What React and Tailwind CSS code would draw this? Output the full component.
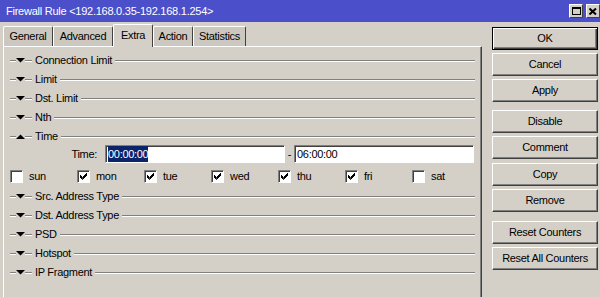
import React from 'react';

const font = { fontFamily: '"Liberation Sans", Arial, sans-serif' };

// etched separator line (grey over white)
const Etch = ({ className = '' }) => (
  <span className={`block h-[2px] border-t border-b border-t-[#808080] border-b-white ${className}`} />
);

const Arrow = ({ up }) => (
  <svg width="9" height="5" viewBox="0 0 9 5" className="block shrink-0">
    {up ? <polygon points="0,5 9,5 4.5,0.5" fill="#000" /> : <polygon points="0,0 9,0 4.5,4.5" fill="#000" />}
  </svg>
);

const Section = ({ label, open }) => (
  <div className="flex h-[19px] items-center pl-[6px] pr-[6px]">
    <Etch className="w-[6px]" />
    <Arrow up={open} />
    <Etch className="w-[7px]" />
    <span className="ml-[3px] mr-[3px] whitespace-nowrap">{label}</span>
    <Etch className="flex-1" />
  </div>
);

const Check = ({ on, label }) => (
  <div className="flex w-[67px] items-center">
    <span className="flex h-[13px] w-[13px] items-center justify-center border border-t-[#808080] border-l-[#808080] border-r-white border-b-white bg-white shadow-[inset_1px_1px_0_#404040]">
      {on && (
        <svg width="7" height="7" viewBox="0 0 7 7" className="block">
          <path d="M0 2 L2.5 4.5 L7 0 M0 3 L2.5 5.5 L7 1 M0 4 L2.5 6.5 L7 2" stroke="#000" strokeWidth="1" fill="none" />
        </svg>
      )}
    </span>
    <span className="ml-[6px]">{label}</span>
  </div>
);

const Button = ({ children, def, className = '' }) => (
  <div
    className={`flex h-[23px] w-[106px] items-center justify-center ${
      def
        ? 'border border-black shadow-[inset_1px_1px_0_#fff,inset_-1px_-1px_0_#404040,inset_-2px_-2px_0_#808080]'
        : 'border border-t-white border-l-white border-r-[#404040] border-b-[#404040] shadow-[inset_-1px_-1px_0_#808080]'
    } ${className}`}
  >
    {children}
  </div>
);

const Input = ({ children }) => (
  <div className="flex h-[18px] w-[180px] items-center border border-t-[#808080] border-l-[#808080] border-r-white border-b-white bg-white pl-[2px] shadow-[inset_1px_1px_0_#404040]">
    {children}
  </div>
);

const tabs = [
  { name: 'General', w: 'w-[50px]' },
  { name: 'Advanced', w: 'w-[60px]' },
  { name: 'Extra', w: 'w-[40px]', active: true },
  { name: 'Action', w: 'w-[40px]' },
  { name: 'Statistics', w: 'w-[53px]' },
];

const days = [
  ['sun', false], ['mon', true], ['tue', true], ['wed', true],
  ['thu', true], ['fri', true], ['sat', false],
];

export default function App() {
  return (
    <div className="flex h-[297px] w-[600px] flex-col overflow-hidden bg-[#d4d0c8] text-[11px] tracking-[-0.3px] text-black" style={font}>
      {/* title bar */}
      <div className="flex h-[22px] shrink-0 items-center bg-[#4b4fc9] pl-[6px] text-white">
        <span className="flex-1 tracking-[-0.25px]">Firewall Rule &lt;192.168.0.35-192.168.1.254&gt;</span>
        <div className="flex items-center gap-[3px]">
          <span className="flex h-[14px] w-[14px] items-center justify-center border border-t-white border-l-white border-r-[#404040] border-b-[#404040] bg-[#d4d0c8]">
            <span className="block h-[8px] w-[9px] border border-t-2 border-black" />
          </span>
          <span className="flex h-[14px] w-[14px] items-center justify-center border border-t-white border-l-white border-r-[#404040] border-b-[#404040] bg-[#d4d0c8]">
            <svg width="8" height="7" viewBox="0 0 8 7" className="block">
              <path d="M0.5 0.5 L7 6.5 M7 0.5 L0.5 6.5" stroke="#000" strokeWidth="2" />
            </svg>
          </span>
        </div>
      </div>

      <div className="flex flex-1">
        {/* left: tabs + panel */}
        <div className="flex w-[482px] flex-col pl-[3px]">
          <div className="flex h-[24px] items-end">
            {tabs.map((t) => (
              <div
                key={t.name}
                className={`flex items-center justify-center rounded-t-[2px] border-l border-t border-r border-l-white border-t-white border-r-[#404040] ${t.w} ${
                  t.active ? 'relative z-10 -mb-[1px] h-[23px] bg-[#d4d0c8] pb-[2px]' : 'h-[20px] bg-[#ccc8c0]'
                }`}
              >
                {t.name}
              </div>
            ))}
          </div>
          <div className="flex-1 border-l border-t border-r border-l-white border-t-white border-r-[#404040] pt-[4px] shadow-[inset_-1px_0_0_#808080]">
            <Section label="Connection Limit" />
            <Section label="Limit" />
            <Section label="Dst. Limit" />
            <Section label="Nth" />
            <Section label="Time" open />
            <div className="-mt-[1px] flex h-[18px] items-center">
              <span className="w-[93px] text-right">Time:</span>
              <div className="ml-[8px]">
                <Input>
                  <span className="bg-[#0a246a] text-white">00:00:00</span>
                </Input>
              </div>
              <span className="w-[9px] text-center">-</span>
              <Input>06:00:00</Input>
            </div>
            <div className="flex h-[24px] items-center pl-[6px] pt-[3px]">
              {days.map(([d, on]) => (
                <Check key={d} on={on} label={d} />
              ))}
            </div>
            <Section label="Src. Address Type" />
            <Section label="Dst. Address Type" />
            <Section label="PSD" />
            <Section label="Hotspot" />
            <Section label="IP Fragment" />
          </div>
        </div>

        {/* right: buttons */}
        <div className="ml-[10px] flex flex-col pt-[5px]">
          <Button def>OK</Button>
          <Button className="mt-[3px]">Cancel</Button>
          <Button className="mt-[3px]">Apply</Button>
          <Button className="mt-[8px]">Disable</Button>
          <Button className="mt-[3px]">Comment</Button>
          <Button className="mt-[4px]">Copy</Button>
          <Button className="mt-[3px]">Remove</Button>
          <Button className="mt-[9px]">Reset Counters</Button>
          <Button className="mt-[3px]">Reset All Counters</Button>
        </div>
      </div>
    </div>
  );
}
